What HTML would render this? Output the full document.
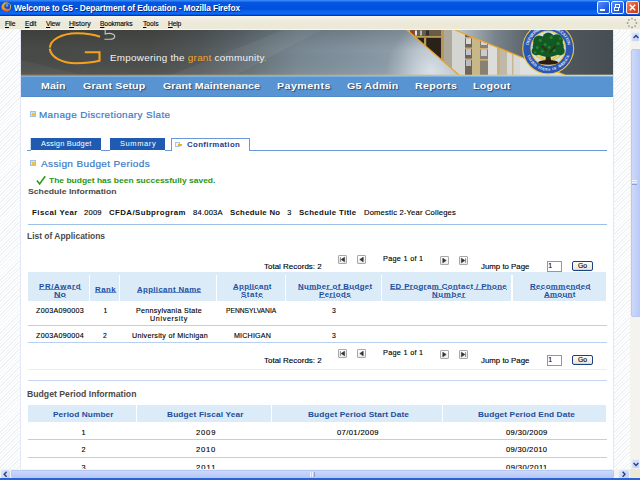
<!DOCTYPE html>
<html><head><meta charset="utf-8"><title>G5</title>
<style>
html,body{margin:0;padding:0;width:640px;height:480px;overflow:hidden;background:#fff;font-family:'Liberation Sans',sans-serif;}
.t{position:absolute;white-space:nowrap;font-family:'Liberation Sans',sans-serif;}
.a{position:absolute;box-sizing:border-box;}
.stripe{background:repeating-linear-gradient(135deg,#ffffff 0px,#ffffff 1.5px,#eff3f5 1.5px,#eff3f5 2.5px);}
.pb{position:absolute;width:9px;height:9px;box-sizing:border-box;border:1px solid #a8a8a8;border-radius:1px;background:linear-gradient(#ffffff,#ececec);}
.inp{position:absolute;box-sizing:border-box;border:1px solid #7f9db9;background:#fff;}
.go{position:absolute;box-sizing:border-box;border:1px solid #1c3f86;border-radius:2px;background:linear-gradient(#fdfdfb,#ece9dc 85%,#d6d0c0);}
.hl{position:absolute;height:1px;background:#b9d1ee;}
</style></head><body>
<!-- ===== TITLE BAR ===== -->
<div class="a" style="left:0;top:0;width:640px;height:16px;background:linear-gradient(#3a8cf8 0px,#2a7af2 1px,#0656e2 2.5px,#0050dc 9px,#0862f0 11px,#0a6cf8 14px,#0038c4 15.2px,#0030b0 16px);"></div>
<svg class="a" style="left:0;top:0" width="14" height="14" viewBox="0 0 14 14">
  <circle cx="6.2" cy="7" r="4.7" fill="#f2a024"/>
  <path d="M1.8 8.6 C2.6 10.8 4.4 11.7 6.2 11.7 C8 11.7 9.6 10.9 10.4 9.6 C9 10.6 7.6 10.8 6.2 10.6 C4.4 10.3 2.8 9.8 1.8 8.6 Z" fill="#d83a10"/>
  <circle cx="7.3" cy="6.4" r="3" fill="#1a4cc0"/>
  <circle cx="7" cy="5.4" r="1.4" fill="#5a9ae8"/>
  <path d="M9.6 3.6 C11.2 5 11.4 8 9.8 9.6 C10.4 7.8 10.3 5.4 9.6 3.6 Z" fill="#f8d040"/>
  <path d="M4.8 7.6 C5.6 8.8 7.4 9.2 8.6 8.6 C7 9.8 5.4 9.4 4.8 7.6 Z" fill="#f2a024"/>
</svg>
<!-- caption buttons -->
<div class="a" style="left:597px;top:1px;width:13px;height:13px;border:1px solid #e8eefc;border-radius:2px;background:linear-gradient(135deg,#5a8ef8,#2a62e8 60%,#1e50d0);"></div>
<div class="a" style="left:600px;top:9px;width:5px;height:2px;background:#fff;"></div>
<div class="a" style="left:611px;top:1px;width:13px;height:13px;border:1px solid #e8eefc;border-radius:2px;background:linear-gradient(135deg,#5a8ef8,#2a62e8 60%,#1e50d0);"></div>
<div class="a" style="left:615px;top:4px;width:5px;height:4px;border:1px solid #fff;border-top-width:1.5px;"></div>
<div class="a" style="left:613.5px;top:6.5px;width:5px;height:4px;border:1px solid #fff;border-top-width:1.5px;background:#2a62e8;"></div>
<div class="a" style="left:626px;top:1px;width:13px;height:13px;border:1px solid #f4e8e0;border-radius:2px;background:linear-gradient(135deg,#f08a60,#e0502a 55%,#c83a18);"></div>
<svg class="a" style="left:626px;top:1px" width="13" height="13"><path d="M3.8 3.8 L9.2 9.2 M9.2 3.8 L3.8 9.2" stroke="#fff" stroke-width="1.6"/></svg>
<!-- ===== MENU BAR ===== -->
<div class="a" style="left:0;top:16px;width:640px;height:14px;background:linear-gradient(#f6f4ee 0px,#f0eee4 3px,#ece9d8 7px,#ece9d8 14px);"></div>
<div class="a" style="left:0;top:28.5px;width:640px;height:1px;background:#f8f6ee;"></div>
<svg class="a" style="left:626px;top:17px" width="12" height="12">
  <g fill="#9a9a9a"><circle cx="6" cy="1.6" r="0.9"/><circle cx="9.1" cy="2.9" r="0.9"/><circle cx="10.4" cy="6" r="0.9"/><circle cx="9.1" cy="9.1" r="0.9"/><circle cx="6" cy="10.4" r="0.9"/><circle cx="2.9" cy="9.1" r="0.9"/><circle cx="1.6" cy="6" r="0.9"/><circle cx="2.9" cy="2.9" r="0.9"/></g>
</svg>
<!-- ===== PAGE BACKGROUND ===== -->
<div class="a stripe" style="left:0;top:30px;width:20px;height:439px;"></div>
<div class="a" style="left:20px;top:30px;width:1px;height:439px;background:#e4e7f8;"></div>
<div class="a" style="left:613px;top:30px;width:1px;height:439px;background:#e4e7f8;"></div>
<div class="a stripe" style="left:614px;top:30px;width:15.5px;height:439px;"></div>
<!-- ===== BANNER ===== -->
<svg class="a" style="left:21px;top:30px" width="592" height="46" viewBox="0 0 592 46">
  <defs>
    <linearGradient id="sky" x1="0" x2="592" y1="0" y2="0" gradientUnits="userSpaceOnUse">
      <stop offset="0" stop-color="#474a46"/>
      <stop offset="0.218" stop-color="#4a4c4a"/>
      <stop offset="0.302" stop-color="#525759"/>
      <stop offset="0.37" stop-color="#5f696e"/>
      <stop offset="0.42" stop-color="#6c7a82"/>
      <stop offset="0.471" stop-color="#788893"/>
      <stop offset="0.556" stop-color="#82929f"/>
      <stop offset="0.64" stop-color="#8e9eaa"/>
      <stop offset="0.69" stop-color="#a6b2be"/>
    </linearGradient>
    <linearGradient id="vsh" x1="0" x2="0" y1="0" y2="1">
      <stop offset="0" stop-color="#000" stop-opacity="0.14"/>
      <stop offset="0.45" stop-color="#000" stop-opacity="0"/>
      <stop offset="1" stop-color="#fff" stop-opacity="0.06"/>
    </linearGradient>
    <radialGradient id="glow" cx="410" cy="40" r="45" gradientUnits="userSpaceOnUse">
      <stop offset="0" stop-color="#dfe6ec" stop-opacity="0.9"/>
      <stop offset="1" stop-color="#dfe6ec" stop-opacity="0"/>
    </radialGradient>
    <linearGradient id="sky2" x1="434" x2="592" y1="0" y2="0" gradientUnits="userSpaceOnUse">
      <stop offset="0" stop-color="#c0c8d0"/>
      <stop offset="0.25" stop-color="#7a848c"/>
      <stop offset="0.5" stop-color="#555d63"/>
      <stop offset="1" stop-color="#464e54"/>
    </linearGradient>
    <clipPath id="books"><polygon points="386,0 434,0 544,45 438,45"/></clipPath>
    <clipPath id="leftsky"><polygon points="0,0 386,0 438,45 0,45"/></clipPath>
    
    
  </defs>
  <rect x="0" y="0" width="592" height="45" fill="url(#sky)"/>
  <g clip-path="url(#leftsky)"><rect x="300" y="0" width="150" height="45" fill="url(#glow)"/></g>
  <rect x="0" y="0" width="592" height="45" fill="url(#vsh)"/>
  <polygon points="150,45 215,45 300,0 262,0" fill="#fff" opacity="0.05"/>
  <polygon points="0,30 0,45 60,45" fill="#fff" opacity="0.04"/>
  <polygon points="434,0 592,0 592,45 544,45" fill="url(#sky2)"/>
  <g clip-path="url(#books)">
    <rect x="380" y="0" width="170" height="45" fill="#e0e0de"/>
    <rect x="379" y="0" width="41" height="45" fill="#2a2218"/>
    <rect x="379" y="0" width="41" height="6" fill="#6a5a48"/>
    <rect x="384" y="0.5" width="1.5" height="5" fill="#d03020"/><rect x="387" y="0.5" width="2" height="5" fill="#e8e8e8"/><rect x="391" y="0.5" width="1.5" height="5" fill="#c02818"/><rect x="394" y="0.5" width="2" height="5" fill="#e0e0e0"/><rect x="399" y="0.5" width="2" height="5" fill="#b0b8c0"/><rect x="405" y="0.5" width="3" height="5" fill="#303030"/>
    <rect x="379" y="6" width="41" height="1.8" fill="#b89a58"/>
    <rect x="403" y="8" width="2.2" height="16" fill="#b09858"/>
    <rect x="420" y="0" width="3" height="45" fill="#b89858"/>
    <rect x="423" y="0" width="8" height="45" fill="#aca89c"/>
    <rect x="431" y="0" width="13" height="45" fill="#d4d4d0"/>
    <rect x="444" y="0" width="7" height="45" fill="#706658"/>
    <rect x="445" y="8" width="5" height="6" fill="#d8d8e0"/><rect x="445" y="19" width="5" height="6" fill="#c0c4cc"/><rect x="445" y="30" width="5" height="6" fill="#b8bcc4"/>
    <rect x="444" y="7" width="7" height="1.6" fill="#c8a868"/>
    <rect x="444" y="17.5" width="7" height="1.6" fill="#c8a868"/>
    <rect x="444" y="28.5" width="7" height="1.6" fill="#c8a868"/>
    <rect x="451" y="0" width="8" height="45" fill="#c8b888"/>
    <rect x="459" y="0" width="8" height="45" fill="#8a8070"/>
    <rect x="460" y="8" width="6" height="7" fill="#d0d4da"/><rect x="460" y="19" width="6" height="7" fill="#c8ccd2"/>
    <rect x="459" y="7" width="8" height="1.6" fill="#d0b070"/>
    <rect x="459" y="18" width="8" height="1.6" fill="#d0b070"/>
    <rect x="459" y="29" width="8" height="1.6" fill="#d0b070"/>
    <rect x="467" y="0" width="9" height="45" fill="#dcdcda"/>
    <rect x="476" y="0" width="3" height="45" fill="#c8b080"/>
    <rect x="479" y="0" width="7" height="45" fill="#c0b8a8"/>
    <rect x="486" y="0" width="13" height="45" fill="#d8d8d6"/>
    <rect x="491" y="0" width="1.5" height="45" fill="#c8b890"/>
  </g>
  <line x1="386" y1="0" x2="438" y2="45" stroke="#e8a428" stroke-width="1.25"/>
  <line x1="434" y1="0" x2="544" y2="45" stroke="#e8a428" stroke-width="1.25"/>
  <!-- G logo -->
  <g fill="none" stroke="#f4a21e" stroke-width="2.1">
    <path d="M79 6.8 C72 4 63 3.2 56 3.2 C40 3.3 29.5 10 28.8 17.6"/>
    <path d="M28.8 18.6 C29.5 27 41 33.2 55 33.2 C65 33.2 74 32 78.5 30.8 L78.5 22.3 L63.8 22.3"/>
  </g>
  <path d="M84.2 -1 L84.2 4 C86 3.4 88.5 3.2 90.5 3.6 C93.2 4.2 94 5.8 93.6 7.2 C93 8.8 91.2 9.2 89 9.2 L83.4 9.2" fill="none" stroke="#c2c6c8" stroke-width="1.15"/>
  <!-- seal -->
  <g transform="translate(527.2,18.4)">
    <circle r="26" fill="#e8c444"/>
    <circle r="24.9" fill="#2a56b4"/>
    <g font-family="Liberation Serif" font-size="4.2" font-weight="bold" fill="#e8eefa"><text x="-20.71" y="-4.96" transform="rotate(-76.5 -20.71 -4.96)" text-anchor="middle" dominant-baseline="central">D</text><text x="-19.96" y="-7.44" transform="rotate(-69.6 -19.96 -7.44)" text-anchor="middle" dominant-baseline="central">E</text><text x="-18.91" y="-9.80" transform="rotate(-62.6 -18.91 -9.80)" text-anchor="middle" dominant-baseline="central">P</text><text x="-17.59" y="-12.02" transform="rotate(-55.7 -17.59 -12.02)" text-anchor="middle" dominant-baseline="central">A</text><text x="-16.00" y="-14.06" transform="rotate(-48.7 -16.00 -14.06)" text-anchor="middle" dominant-baseline="central">R</text><text x="-14.18" y="-15.89" transform="rotate(-41.7 -14.18 -15.89)" text-anchor="middle" dominant-baseline="central">T</text><text x="-12.15" y="-17.49" transform="rotate(-34.8 -12.15 -17.49)" text-anchor="middle" dominant-baseline="central">M</text><text x="-9.94" y="-18.84" transform="rotate(-27.8 -9.94 -18.84)" text-anchor="middle" dominant-baseline="central">E</text><text x="-7.59" y="-19.90" transform="rotate(-20.9 -7.59 -19.90)" text-anchor="middle" dominant-baseline="central">N</text><text x="-5.12" y="-20.68" transform="rotate(-13.9 -5.12 -20.68)" text-anchor="middle" dominant-baseline="central">T</text><text x="0.00" y="-21.30" transform="rotate(0.0 0.00 -21.30)" text-anchor="middle" dominant-baseline="central">O</text><text x="2.58" y="-21.14" transform="rotate(7.0 2.58 -21.14)" text-anchor="middle" dominant-baseline="central">F</text><text x="7.59" y="-19.90" transform="rotate(20.9 7.59 -19.90)" text-anchor="middle" dominant-baseline="central">E</text><text x="9.94" y="-18.84" transform="rotate(27.8 9.94 -18.84)" text-anchor="middle" dominant-baseline="central">D</text><text x="12.15" y="-17.49" transform="rotate(34.8 12.15 -17.49)" text-anchor="middle" dominant-baseline="central">U</text><text x="14.18" y="-15.89" transform="rotate(41.7 14.18 -15.89)" text-anchor="middle" dominant-baseline="central">C</text><text x="16.00" y="-14.06" transform="rotate(48.7 16.00 -14.06)" text-anchor="middle" dominant-baseline="central">A</text><text x="17.59" y="-12.02" transform="rotate(55.7 17.59 -12.02)" text-anchor="middle" dominant-baseline="central">T</text><text x="18.91" y="-9.80" transform="rotate(62.6 18.91 -9.80)" text-anchor="middle" dominant-baseline="central">I</text><text x="19.96" y="-7.44" transform="rotate(69.6 19.96 -7.44)" text-anchor="middle" dominant-baseline="central">O</text><text x="20.71" y="-4.96" transform="rotate(76.5 20.71 -4.96)" text-anchor="middle" dominant-baseline="central">N</text></g><g font-family="Liberation Serif" font-size="3.8" font-weight="bold" fill="#e8eefa"><text x="-19.62" y="8.29" transform="rotate(67.1 -19.62 8.29)" text-anchor="middle" dominant-baseline="central">U</text><text x="-18.67" y="10.25" transform="rotate(61.2 -18.67 10.25)" text-anchor="middle" dominant-baseline="central">N</text><text x="-17.54" y="12.09" transform="rotate(55.4 -17.54 12.09)" text-anchor="middle" dominant-baseline="central">I</text><text x="-16.22" y="13.81" transform="rotate(49.6 -16.22 13.81)" text-anchor="middle" dominant-baseline="central">T</text><text x="-14.73" y="15.39" transform="rotate(43.8 -14.73 15.39)" text-anchor="middle" dominant-baseline="central">E</text><text x="-13.09" y="16.80" transform="rotate(37.9 -13.09 16.80)" text-anchor="middle" dominant-baseline="central">D</text><text x="-9.42" y="19.10" transform="rotate(26.2 -9.42 19.10)" text-anchor="middle" dominant-baseline="central">S</text><text x="-7.43" y="19.96" transform="rotate(20.4 -7.43 19.96)" text-anchor="middle" dominant-baseline="central">T</text><text x="-5.36" y="20.61" transform="rotate(14.6 -5.36 20.61)" text-anchor="middle" dominant-baseline="central">A</text><text x="-3.24" y="21.05" transform="rotate(8.8 -3.24 21.05)" text-anchor="middle" dominant-baseline="central">T</text><text x="-1.08" y="21.27" transform="rotate(2.9 -1.08 21.27)" text-anchor="middle" dominant-baseline="central">E</text><text x="1.08" y="21.27" transform="rotate(-2.9 1.08 21.27)" text-anchor="middle" dominant-baseline="central">S</text><text x="5.36" y="20.61" transform="rotate(-14.6 5.36 20.61)" text-anchor="middle" dominant-baseline="central">O</text><text x="7.43" y="19.96" transform="rotate(-20.4 7.43 19.96)" text-anchor="middle" dominant-baseline="central">F</text><text x="11.31" y="18.05" transform="rotate(-32.1 11.31 18.05)" text-anchor="middle" dominant-baseline="central">A</text><text x="13.09" y="16.80" transform="rotate(-37.9 13.09 16.80)" text-anchor="middle" dominant-baseline="central">M</text><text x="14.73" y="15.39" transform="rotate(-43.8 14.73 15.39)" text-anchor="middle" dominant-baseline="central">E</text><text x="16.22" y="13.81" transform="rotate(-49.6 16.22 13.81)" text-anchor="middle" dominant-baseline="central">R</text><text x="17.54" y="12.09" transform="rotate(-55.4 17.54 12.09)" text-anchor="middle" dominant-baseline="central">I</text><text x="18.67" y="10.25" transform="rotate(-61.2 18.67 10.25)" text-anchor="middle" dominant-baseline="central">C</text><text x="19.62" y="8.29" transform="rotate(-67.1 19.62 8.29)" text-anchor="middle" dominant-baseline="central">A</text></g>
    <circle r="17.8" fill="#e8c444"/>
    <circle r="16.6" fill="#d4e0ee"/>
    <g stroke="#e8c830" stroke-width="1.4" opacity="0.9">
      <line x1="0" y1="14" x2="-12" y2="8"/><line x1="0" y1="14" x2="12" y2="8"/>
      <line x1="0" y1="14" x2="-15" y2="2"/><line x1="0" y1="14" x2="15" y2="2"/>
    </g>
    <path d="M-3 13 L-1.5 2 L1.5 2 L3 13 Z" fill="#3a2810"/>
    <ellipse cx="0" cy="14" rx="10" ry="2.4" fill="#2a1c10"/>
    <g fill="#125a22">
      <ellipse cx="0" cy="-2" rx="15.5" ry="10.5"/>
      <circle cx="-9" cy="-7" r="6"/><circle cx="8.5" cy="-8" r="6.2"/><circle cx="0" cy="-10" r="5.8"/>
      <circle cx="-12" cy="2.5" r="4.5"/><circle cx="12" cy="2.5" r="4.5"/>
    </g>
    <g fill="#2a8038">
      <circle cx="-8" cy="-8" r="1.6"/><circle cx="3" cy="-11" r="1.6"/><circle cx="10" cy="-5" r="1.5"/><circle cx="-11" cy="-1" r="1.5"/>
      <circle cx="-3" cy="-4" r="1.5"/><circle cx="6" cy="2" r="1.5"/><circle cx="-6" cy="3" r="1.4"/><circle cx="12" cy="-10" r="1.2"/><circle cx="-13" cy="4" r="1.2"/><circle cx="1" cy="-1" r="1.3"/>
    </g>
    <g fill="#3a2810"><path d="M-1.5 3 L-7 -2 L-6 -3 L-1 1 Z"/><path d="M1.5 3 L7 -3 L8 -2 L1.5 5 Z"/></g>
  </g>
  <linearGradient id="bl" x1="0" x2="592" gradientUnits="userSpaceOnUse"><stop offset="0" stop-color="#b8843c"/><stop offset="0.5" stop-color="#c8a870"/><stop offset="1" stop-color="#e0d8a0"/></linearGradient><rect x="0" y="44.7" width="592" height="1.3" fill="url(#bl)"/>
</svg>
<!-- ===== NAV ===== -->
<div class="a" style="left:21px;top:76px;width:592px;height:21px;background:#5994d2;border-top:1px solid #7fb0dc;border-bottom:1px solid #4f8aca;"></div>
<!-- ===== CONTENT ===== -->
<!-- heading icons -->
<div class="a" style="left:30px;top:111px;width:6px;height:6px;background:#cfe0f4;border:1px solid #9fc2ea;"></div>
<div class="a" style="left:31.5px;top:112.5px;width:3px;height:3px;background:#f0c030;border-radius:1px;"></div>
<div class="a" style="left:30px;top:160.2px;width:6px;height:6px;background:#cfe0f4;border:1px solid #9fc2ea;"></div>
<div class="a" style="left:31.5px;top:161.7px;width:3px;height:3px;background:#f0c030;border-radius:1px;"></div>
<!-- tabs -->
<div class="a" style="left:27px;top:149.5px;width:4px;height:1px;background:#6a9ad8;"></div>
<div class="a" style="left:30px;top:138px;width:1px;height:12px;background:#c8d8f0;"></div>
<div class="a" style="left:31px;top:138px;width:70px;height:11.5px;background:#1f5bb0;"></div>
<div class="a" style="left:101px;top:149.5px;width:9px;height:1px;background:#6a9ad8;"></div>
<div class="a" style="left:110px;top:138px;width:55px;height:11.5px;background:#1f5bb0;"></div>
<div class="a" style="left:165px;top:149.5px;width:7px;height:1px;background:#6a9ad8;"></div>
<div class="a" style="left:171px;top:138px;width:79px;height:12.5px;border:1px solid #6a9ad8;border-bottom:none;background:#fff;"></div>
<div class="a" style="left:250px;top:149.5px;width:357px;height:1px;background:#6a9ad8;"></div>
<div class="a" style="left:175px;top:142px;width:5px;height:5px;border:1px solid #a8c4e8;background:#eef4fb;"></div>
<div class="a" style="left:178px;top:144px;width:4px;height:1.5px;background:#f0b020;"></div>
<!-- check -->
<svg class="a" style="left:36px;top:175px" width="10" height="10"><path d="M1 5.5 L3.6 9 L9.2 1.2" fill="none" stroke="#2a9614" stroke-width="1.5"/></svg>
<!-- fiscal line -->
<div class="hl" style="left:27.5px;top:223.8px;width:579px;background:#9cc0e8;"></div>
<!-- pagination buttons -->
<div class="pb" style="left:338.0px;top:255.0px"></div>
<svg class="a" style="left:338.0px;top:255.0px" width="9" height="9"><path d="M2.4 2.2 L2.4 6.8 M6.6 2.2 L3.2 4.5 L6.6 6.8 Z" fill="#333" stroke="#333" stroke-width="0.6"/></svg>
<div class="pb" style="left:357.0px;top:255.0px"></div>
<svg class="a" style="left:357.0px;top:255.0px" width="9" height="9"><path d="M6.2 2.2 L2.8 4.5 L6.2 6.8 Z" fill="#333" stroke="#333" stroke-width="0.6"/></svg>
<div class="pb" style="left:440.0px;top:256.0px"></div>
<svg class="a" style="left:440.0px;top:256.0px" width="9" height="9"><path d="M2.8 2.2 L6.2 4.5 L2.8 6.8 Z" fill="#333" stroke="#333" stroke-width="0.6"/></svg>
<div class="pb" style="left:458.5px;top:256.0px"></div>
<svg class="a" style="left:458.5px;top:256.0px" width="9" height="9"><path d="M6.6 2.2 L6.6 6.8 M2.4 2.2 L5.8 4.5 L2.4 6.8 Z" fill="#333" stroke="#333" stroke-width="0.6"/></svg>
<div class="inp" style="left:547px;top:260.5px;width:14.5px;height:11px"></div>
<div class="go" style="left:572px;top:260.8px;width:20.8px;height:10px"></div>
<div class="pb" style="left:338.0px;top:348.5px"></div>
<svg class="a" style="left:338.0px;top:348.5px" width="9" height="9"><path d="M2.4 2.2 L2.4 6.8 M6.6 2.2 L3.2 4.5 L6.6 6.8 Z" fill="#333" stroke="#333" stroke-width="0.6"/></svg>
<div class="pb" style="left:357.0px;top:348.5px"></div>
<svg class="a" style="left:357.0px;top:348.5px" width="9" height="9"><path d="M6.2 2.2 L2.8 4.5 L6.2 6.8 Z" fill="#333" stroke="#333" stroke-width="0.6"/></svg>
<div class="pb" style="left:440.0px;top:349.5px"></div>
<svg class="a" style="left:440.0px;top:349.5px" width="9" height="9"><path d="M2.8 2.2 L6.2 4.5 L2.8 6.8 Z" fill="#333" stroke="#333" stroke-width="0.6"/></svg>
<div class="pb" style="left:458.5px;top:349.5px"></div>
<svg class="a" style="left:458.5px;top:349.5px" width="9" height="9"><path d="M6.6 2.2 L6.6 6.8 M2.4 2.2 L5.8 4.5 L2.4 6.8 Z" fill="#333" stroke="#333" stroke-width="0.6"/></svg>
<div class="inp" style="left:547px;top:354.5px;width:14.5px;height:11px"></div>
<div class="go" style="left:572px;top:354.8px;width:20.8px;height:10px"></div>
<!-- table1 header -->
<div class="a" style="left:27.5px;top:272px;width:578.6px;height:28.8px;background:#dcebf8;"></div>
<div class="a" style="left:89px;top:274.7px;width:1.2px;height:26.3px;background:#fff;"></div>
<div class="a" style="left:119px;top:274.7px;width:1.2px;height:26.3px;background:#fff;"></div>
<div class="a" style="left:216px;top:274.7px;width:1.2px;height:26.3px;background:#fff;"></div>
<div class="a" style="left:284.8px;top:274.7px;width:1.2px;height:26.3px;background:#fff;"></div>
<div class="a" style="left:381px;top:274.7px;width:1.2px;height:26.3px;background:#fff;"></div>
<div class="a" style="left:511.4px;top:274.7px;width:1.2px;height:26.3px;background:#fff;"></div>
<div class="hl" style="left:27.5px;top:325px;width:579px;"></div>
<div class="hl" style="left:27.5px;top:342px;width:579px;"></div>
<div class="hl" style="left:27.5px;top:368.5px;width:579px;background:#e6eef8;"></div>
<div class="hl" style="left:27.5px;top:380.3px;width:579px;background:#c6d6ee;"></div>
<!-- table2 header -->
<div class="a" style="left:27.5px;top:405px;width:578.8px;height:17px;background:#dcebf8;"></div>
<div class="a" style="left:136.2px;top:405px;width:1.2px;height:17px;background:#fff;"></div>
<div class="a" style="left:270.8px;top:405px;width:1.2px;height:17px;background:#fff;"></div>
<div class="a" style="left:442.3px;top:405px;width:1.2px;height:17px;background:#fff;"></div>
<div class="hl" style="left:27.5px;top:439.4px;width:579px;"></div>
<div class="hl" style="left:27.5px;top:457.2px;width:579px;"></div>
<div id="t0" class="t" style="left:14.00px;top:3.18px;font-size:9.49px;line-height:9.49px;font-weight:bold;color:#fff;letter-spacing:-0.124px;transform:scaleX(0.8800);transform-origin:0 0;text-shadow:1px 1px 0 #0a1f80;">Welcome to G5 - Department of Education - Mozilla Firefox</div>
<div id="t1" class="t" style="left:4.50px;top:19.67px;font-size:7.68px;line-height:7.68px;color:#000;letter-spacing:-0.178px;transform:scaleX(0.8800);transform-origin:0 0;-webkit-text-stroke:0.12px #000;"><u style="text-decoration-thickness:0.7px;text-underline-offset:0.6px">F</u>ile</div>
<div id="t2" class="t" style="left:24.50px;top:19.67px;font-size:7.68px;line-height:7.68px;color:#000;letter-spacing:-0.083px;transform:scaleX(0.8800);transform-origin:0 0;-webkit-text-stroke:0.12px #000;"><u style="text-decoration-thickness:0.7px;text-underline-offset:0.6px">E</u>dit</div>
<div id="t3" class="t" style="left:46.00px;top:19.67px;font-size:7.68px;line-height:7.68px;color:#000;letter-spacing:-0.197px;transform:scaleX(0.8800);transform-origin:0 0;-webkit-text-stroke:0.12px #000;"><u style="text-decoration-thickness:0.7px;text-underline-offset:0.6px">V</u>iew</div>
<div id="t4" class="t" style="left:69.30px;top:19.67px;font-size:7.68px;line-height:7.68px;color:#000;letter-spacing:-0.009px;transform:scaleX(0.9118);transform-origin:0 0;-webkit-text-stroke:0.12px #000;"><u style="text-decoration-thickness:0.7px;text-underline-offset:0.6px">H</u>istory</div>
<div id="t5" class="t" style="left:100.25px;top:19.67px;font-size:7.68px;line-height:7.68px;color:#000;letter-spacing:-0.173px;transform:scaleX(0.8800);transform-origin:0 0;-webkit-text-stroke:0.12px #000;"><u style="text-decoration-thickness:0.7px;text-underline-offset:0.6px">B</u>ookmarks</div>
<div id="t6" class="t" style="left:142.75px;top:19.67px;font-size:7.68px;line-height:7.68px;color:#000;letter-spacing:-0.014px;transform:scaleX(0.8800);transform-origin:0 0;-webkit-text-stroke:0.12px #000;"><u style="text-decoration-thickness:0.7px;text-underline-offset:0.6px">T</u>ools</div>
<div id="t7" class="t" style="left:168.10px;top:19.67px;font-size:7.68px;line-height:7.68px;color:#000;letter-spacing:-0.208px;transform:scaleX(0.8800);transform-origin:0 0;-webkit-text-stroke:0.12px #000;"><u style="text-decoration-thickness:0.7px;text-underline-offset:0.6px">H</u>elp</div>
<div id="t8" class="t" style="left:110.25px;top:52.59px;font-size:9.42px;line-height:9.42px;color:#f2f2f2;letter-spacing:0.237px;transform:scaleX(1.0500);transform-origin:0 0;">Empowering the <span style="color:#f5a623">grant</span> community<span style="color:#f5a623">.</span></div>
<div id="t9" class="t" style="left:40.85px;top:80.62px;font-size:9.86px;line-height:9.86px;font-weight:bold;color:#fff;letter-spacing:0.083px;transform:scaleX(1.0800);transform-origin:0 0;text-shadow:1px 1px 1px #2a4a70;">Main</div>
<div id="t10" class="t" style="left:83.00px;top:80.62px;font-size:9.86px;line-height:9.86px;font-weight:bold;color:#fff;letter-spacing:0.131px;transform:scaleX(1.0800);transform-origin:0 0;text-shadow:1px 1px 1px #2a4a70;">Grant Setup</div>
<div id="t11" class="t" style="left:162.50px;top:80.62px;font-size:9.86px;line-height:9.86px;font-weight:bold;color:#fff;letter-spacing:0.071px;transform:scaleX(1.0800);transform-origin:0 0;text-shadow:1px 1px 1px #2a4a70;">Grant Maintenance</div>
<div id="t12" class="t" style="left:276.75px;top:80.62px;font-size:9.86px;line-height:9.86px;font-weight:bold;color:#fff;letter-spacing:0.431px;transform:scaleX(1.0800);transform-origin:0 0;text-shadow:1px 1px 1px #2a4a70;">Payments</div>
<div id="t13" class="t" style="left:346.50px;top:80.62px;font-size:9.86px;line-height:9.86px;font-weight:bold;color:#fff;letter-spacing:0.185px;transform:scaleX(1.0800);transform-origin:0 0;text-shadow:1px 1px 1px #2a4a70;">G5 Admin</div>
<div id="t14" class="t" style="left:415.25px;top:80.62px;font-size:9.86px;line-height:9.86px;font-weight:bold;color:#fff;letter-spacing:0.250px;transform:scaleX(1.0800);transform-origin:0 0;text-shadow:1px 1px 1px #2a4a70;">Reports</div>
<div id="t15" class="t" style="left:473.25px;top:80.62px;font-size:9.86px;line-height:9.86px;font-weight:bold;color:#fff;letter-spacing:0.250px;transform:scaleX(1.0800);transform-origin:0 0;text-shadow:1px 1px 1px #2a4a70;">Logout</div>
<div id="t16" class="t" style="left:39.25px;top:109.99px;font-size:9.42px;line-height:9.42px;color:#3a7bc8;letter-spacing:0.372px;transform:scaleX(1.0500);transform-origin:0 0;-webkit-text-stroke:0.2px #3a7bc8;">Manage Discretionary Slate</div>
<div id="t17" class="t" style="left:41.00px;top:140.96px;font-size:7.10px;line-height:7.10px;color:#fff;letter-spacing:0.184px;transform:scaleX(1.0500);transform-origin:0 0;">Assign Budget</div>
<div id="t18" class="t" style="left:119.50px;top:140.96px;font-size:7.10px;line-height:7.10px;color:#fff;letter-spacing:0.595px;transform:scaleX(1.0500);transform-origin:0 0;">Summary</div>
<div id="t19" class="t" style="left:187.15px;top:140.64px;font-size:7.25px;line-height:7.25px;font-weight:bold;color:#1a3c8c;letter-spacing:0.348px;transform:scaleX(1.0800);transform-origin:0 0;">Confirmation</div>
<div id="t20" class="t" style="left:40.50px;top:159.07px;font-size:9.57px;line-height:9.57px;color:#3a7bc8;letter-spacing:0.342px;transform:scaleX(1.0500);transform-origin:0 0;-webkit-text-stroke:0.2px #3a7bc8;">Assign Budget Periods</div>
<div id="t21" class="t" style="left:49.00px;top:176.70px;font-size:8.12px;line-height:8.12px;font-weight:bold;color:#2a9614;letter-spacing:-0.003px;transform:scaleX(1.0434);transform-origin:0 0;">The budget has been successfully saved.</div>
<div id="t22" class="t" style="left:27.75px;top:188.30px;font-size:8.12px;line-height:8.12px;font-weight:bold;color:#4a4a4a;letter-spacing:0.002px;transform:scaleX(1.0675);transform-origin:0 0;">Schedule Information</div>
<div id="t23" class="t" style="left:31.50px;top:208.84px;font-size:7.25px;line-height:7.25px;font-weight:bold;color:#111;letter-spacing:0.428px;transform:scaleX(1.0800);transform-origin:0 0;">Fiscal Year</div>
<div id="t24" class="t" style="left:84.10px;top:208.84px;font-size:7.25px;line-height:7.25px;color:#000;letter-spacing:0.198px;transform:scaleX(1.0500);transform-origin:0 0;-webkit-text-stroke:0.12px #000;">2009</div>
<div id="t25" class="t" style="left:108.75px;top:208.84px;font-size:7.25px;line-height:7.25px;font-weight:bold;color:#111;letter-spacing:0.393px;transform:scaleX(1.0800);transform-origin:0 0;">CFDA/Subprogram</div>
<div id="t26" class="t" style="left:192.75px;top:208.84px;font-size:7.25px;line-height:7.25px;color:#000;letter-spacing:0.200px;transform:scaleX(1.0500);transform-origin:0 0;-webkit-text-stroke:0.12px #000;">84.003A</div>
<div id="t27" class="t" style="left:229.75px;top:208.84px;font-size:7.25px;line-height:7.25px;font-weight:bold;color:#111;letter-spacing:0.252px;transform:scaleX(1.0800);transform-origin:0 0;">Schedule No</div>
<div id="t28" class="t" style="left:287.25px;top:208.84px;font-size:7.25px;line-height:7.25px;color:#000;letter-spacing:0.000px;-webkit-text-stroke:0.12px #000;">3</div>
<div id="t29" class="t" style="left:299.35px;top:208.84px;font-size:7.25px;line-height:7.25px;font-weight:bold;color:#111;letter-spacing:0.304px;transform:scaleX(1.0800);transform-origin:0 0;">Schedule Title</div>
<div id="t30" class="t" style="left:364.40px;top:208.84px;font-size:7.25px;line-height:7.25px;color:#000;letter-spacing:0.168px;transform:scaleX(1.0500);transform-origin:0 0;-webkit-text-stroke:0.12px #000;">Domestic 2-Year Colleges</div>
<div id="t31" class="t" style="left:27.25px;top:232.78px;font-size:8.26px;line-height:8.26px;font-weight:bold;color:#4a4a4a;letter-spacing:0.000px;transform:scaleX(1.0232);transform-origin:0 0;">List of Applications</div>
<div id="t32" class="t" style="left:382.50px;top:255.79px;font-size:6.96px;line-height:6.96px;color:#000;letter-spacing:0.268px;transform:scaleX(1.0500);transform-origin:0 0;-webkit-text-stroke:0.12px #000;">Page 1 of 1</div>
<div id="t33" class="t" style="left:264.15px;top:262.53px;font-size:7.61px;line-height:7.61px;color:#000;letter-spacing:0.006px;transform:scaleX(1.0477);transform-origin:0 0;-webkit-text-stroke:0.12px #000;">Total Records: 2</div>
<div id="t34" class="t" style="left:480.75px;top:262.53px;font-size:7.61px;line-height:7.61px;color:#000;letter-spacing:0.000px;transform:scaleX(1.0323);transform-origin:0 0;-webkit-text-stroke:0.12px #000;">Jump to Page</div>
<div id="t35" class="t" style="left:548.30px;top:262.69px;font-size:6.96px;line-height:6.96px;color:#000;letter-spacing:0.000px;-webkit-text-stroke:0.12px #000;">1</div>
<div id="t36" class="t" style="left:578.25px;top:262.98px;font-size:6.38px;line-height:6.38px;color:#000;letter-spacing:0.000px;transform:scaleX(1.0625);transform-origin:0 0;-webkit-text-stroke:0.12px #000;">Go</div>
<div id="t37" class="t" style="left:382.50px;top:349.79px;font-size:6.96px;line-height:6.96px;color:#000;letter-spacing:0.268px;transform:scaleX(1.0500);transform-origin:0 0;-webkit-text-stroke:0.12px #000;">Page 1 of 1</div>
<div id="t38" class="t" style="left:264.15px;top:356.53px;font-size:7.61px;line-height:7.61px;color:#000;letter-spacing:0.006px;transform:scaleX(1.0477);transform-origin:0 0;-webkit-text-stroke:0.12px #000;">Total Records: 2</div>
<div id="t39" class="t" style="left:480.75px;top:356.53px;font-size:7.61px;line-height:7.61px;color:#000;letter-spacing:0.000px;transform:scaleX(1.0323);transform-origin:0 0;-webkit-text-stroke:0.12px #000;">Jump to Page</div>
<div id="t40" class="t" style="left:548.30px;top:356.69px;font-size:6.96px;line-height:6.96px;color:#000;letter-spacing:0.000px;-webkit-text-stroke:0.12px #000;">1</div>
<div id="t41" class="t" style="left:578.25px;top:356.98px;font-size:6.38px;line-height:6.38px;color:#000;letter-spacing:0.000px;transform:scaleX(1.0625);transform-origin:0 0;-webkit-text-stroke:0.12px #000;">Go</div>
<div id="t42" class="t" style="left:38.50px;top:282.54px;font-size:7.25px;line-height:7.25px;font-weight:bold;color:#1d4f9c;letter-spacing:0.634px;transform:scaleX(1.0800);transform-origin:0 0;text-decoration:underline;text-decoration-color:#5f84c8;text-underline-offset:0.2px;text-decoration-thickness:0.8px;">PR/Award</div>
<div id="t43" class="t" style="left:53.50px;top:290.54px;font-size:7.25px;line-height:7.25px;font-weight:bold;color:#1d4f9c;letter-spacing:0.000px;transform:scaleX(1.2222);transform-origin:0 0;text-decoration:underline;text-decoration-color:#5f84c8;text-underline-offset:0.2px;text-decoration-thickness:0.8px;">No</div>
<div id="t44" class="t" style="left:95.10px;top:286.14px;font-size:7.25px;line-height:7.25px;font-weight:bold;color:#1d4f9c;letter-spacing:0.485px;transform:scaleX(1.0800);transform-origin:0 0;text-decoration:underline;text-decoration-color:#5f84c8;text-underline-offset:0.2px;text-decoration-thickness:0.8px;">Rank</div>
<div id="t45" class="t" style="left:137.35px;top:286.14px;font-size:7.25px;line-height:7.25px;font-weight:bold;color:#1d4f9c;letter-spacing:0.335px;transform:scaleX(1.0800);transform-origin:0 0;text-decoration:underline;text-decoration-color:#5f84c8;text-underline-offset:0.2px;text-decoration-thickness:0.8px;">Applicant Name</div>
<div id="t46" class="t" style="left:233.15px;top:282.54px;font-size:7.25px;line-height:7.25px;font-weight:bold;color:#1d4f9c;letter-spacing:0.322px;transform:scaleX(1.0800);transform-origin:0 0;text-decoration:underline;text-decoration-color:#5f84c8;text-underline-offset:0.2px;text-decoration-thickness:0.8px;">Applicant</div>
<div id="t47" class="t" style="left:240.75px;top:290.54px;font-size:7.25px;line-height:7.25px;font-weight:bold;color:#1d4f9c;letter-spacing:0.549px;transform:scaleX(1.0800);transform-origin:0 0;text-decoration:underline;text-decoration-color:#5f84c8;text-underline-offset:0.2px;text-decoration-thickness:0.8px;">State</div>
<div id="t48" class="t" style="left:297.50px;top:282.54px;font-size:7.25px;line-height:7.25px;font-weight:bold;color:#1d4f9c;letter-spacing:0.366px;transform:scaleX(1.0800);transform-origin:0 0;text-decoration:underline;text-decoration-color:#5f84c8;text-underline-offset:0.2px;text-decoration-thickness:0.8px;">Number of Budget</div>
<div id="t49" class="t" style="left:318.50px;top:290.54px;font-size:7.25px;line-height:7.25px;font-weight:bold;color:#1d4f9c;letter-spacing:0.438px;transform:scaleX(1.0800);transform-origin:0 0;text-decoration:underline;text-decoration-color:#5f84c8;text-underline-offset:0.2px;text-decoration-thickness:0.8px;">Periods</div>
<div id="t50" class="t" style="left:389.50px;top:282.54px;font-size:7.25px;line-height:7.25px;font-weight:bold;color:#1d4f9c;letter-spacing:0.357px;transform:scaleX(1.0800);transform-origin:0 0;text-decoration:underline;text-decoration-color:#5f84c8;text-underline-offset:0.2px;text-decoration-thickness:0.8px;">ED Program Contact / Phone</div>
<div id="t51" class="t" style="left:431.50px;top:290.54px;font-size:7.25px;line-height:7.25px;font-weight:bold;color:#1d4f9c;letter-spacing:0.631px;transform:scaleX(1.0800);transform-origin:0 0;text-decoration:underline;text-decoration-color:#5f84c8;text-underline-offset:0.2px;text-decoration-thickness:0.8px;">Number</div>
<div id="t52" class="t" style="left:530.20px;top:282.54px;font-size:7.25px;line-height:7.25px;font-weight:bold;color:#1d4f9c;letter-spacing:0.395px;transform:scaleX(1.0800);transform-origin:0 0;text-decoration:underline;text-decoration-color:#5f84c8;text-underline-offset:0.2px;text-decoration-thickness:0.8px;">Recommended</div>
<div id="t53" class="t" style="left:544.25px;top:290.54px;font-size:7.25px;line-height:7.25px;font-weight:bold;color:#1d4f9c;letter-spacing:0.331px;transform:scaleX(1.0800);transform-origin:0 0;text-decoration:underline;text-decoration-color:#5f84c8;text-underline-offset:0.2px;text-decoration-thickness:0.8px;">Amount</div>
<div id="t54" class="t" style="left:35.75px;top:308.11px;font-size:6.81px;line-height:6.81px;color:#000;letter-spacing:0.285px;transform:scaleX(1.0500);transform-origin:0 0;-webkit-text-stroke:0.12px #000;">Z003A090003</div>
<div id="t55" class="t" style="left:103.50px;top:308.11px;font-size:6.81px;line-height:6.81px;color:#000;letter-spacing:0.000px;-webkit-text-stroke:0.12px #000;">1</div>
<div id="t56" class="t" style="left:136.40px;top:308.11px;font-size:6.81px;line-height:6.81px;color:#000;letter-spacing:0.254px;transform:scaleX(1.0500);transform-origin:0 0;-webkit-text-stroke:0.12px #000;">Pennsylvania State</div>
<div id="t57" class="t" style="left:149.50px;top:315.61px;font-size:6.81px;line-height:6.81px;color:#000;letter-spacing:0.628px;transform:scaleX(1.0500);transform-origin:0 0;-webkit-text-stroke:0.12px #000;">University</div>
<div id="t58" class="t" style="left:226.20px;top:308.11px;font-size:6.81px;line-height:6.81px;color:#000;letter-spacing:-0.018px;transform:scaleX(0.9861);transform-origin:0 0;-webkit-text-stroke:0.12px #000;">PENNSYLVANIA</div>
<div id="t59" class="t" style="left:332.12px;top:308.11px;font-size:6.81px;line-height:6.81px;color:#000;letter-spacing:0.000px;-webkit-text-stroke:0.12px #000;">3</div>
<div id="t60" class="t" style="left:35.75px;top:333.01px;font-size:6.81px;line-height:6.81px;color:#000;letter-spacing:0.285px;transform:scaleX(1.0500);transform-origin:0 0;-webkit-text-stroke:0.12px #000;">Z003A090004</div>
<div id="t61" class="t" style="left:103.12px;top:333.01px;font-size:6.81px;line-height:6.81px;color:#000;letter-spacing:0.000px;-webkit-text-stroke:0.12px #000;">2</div>
<div id="t62" class="t" style="left:131.50px;top:333.01px;font-size:6.81px;line-height:6.81px;color:#000;letter-spacing:0.273px;transform:scaleX(1.0500);transform-origin:0 0;-webkit-text-stroke:0.12px #000;">University of Michigan</div>
<div id="t63" class="t" style="left:233.50px;top:333.01px;font-size:6.81px;line-height:6.81px;color:#000;letter-spacing:0.163px;transform:scaleX(1.0500);transform-origin:0 0;-webkit-text-stroke:0.12px #000;">MICHIGAN</div>
<div id="t64" class="t" style="left:332.12px;top:333.01px;font-size:6.81px;line-height:6.81px;color:#000;letter-spacing:0.000px;-webkit-text-stroke:0.12px #000;">3</div>
<div id="t65" class="t" style="left:27.25px;top:389.56px;font-size:8.41px;line-height:8.41px;font-weight:bold;color:#4a4a4a;letter-spacing:-0.002px;transform:scaleX(1.0329);transform-origin:0 0;">Budget Period Information</div>
<div id="t66" class="t" style="left:53.00px;top:410.97px;font-size:7.68px;line-height:7.68px;font-weight:bold;color:#1d4f9c;letter-spacing:0.088px;transform:scaleX(1.0800);transform-origin:0 0;">Period Number</div>
<div id="t67" class="t" style="left:167.00px;top:410.97px;font-size:7.68px;line-height:7.68px;font-weight:bold;color:#1d4f9c;letter-spacing:0.139px;transform:scaleX(1.0800);transform-origin:0 0;">Budget Fiscal Year</div>
<div id="t68" class="t" style="left:308.00px;top:410.97px;font-size:7.68px;line-height:7.68px;font-weight:bold;color:#1d4f9c;letter-spacing:0.113px;transform:scaleX(1.0800);transform-origin:0 0;">Budget Period Start Date</div>
<div id="t69" class="t" style="left:477.90px;top:410.97px;font-size:7.68px;line-height:7.68px;font-weight:bold;color:#1d4f9c;letter-spacing:0.090px;transform:scaleX(1.0800);transform-origin:0 0;">Budget Period End Date</div>
<div id="t70" class="t" style="left:81.38px;top:428.84px;font-size:7.25px;line-height:7.25px;color:#000;letter-spacing:0.000px;-webkit-text-stroke:0.12px #000;">1</div>
<div id="t71" class="t" style="left:196.00px;top:428.84px;font-size:7.25px;line-height:7.25px;color:#000;letter-spacing:0.786px;transform:scaleX(1.0500);transform-origin:0 0;-webkit-text-stroke:0.12px #000;">2009</div>
<div id="t72" class="t" style="left:337.25px;top:428.84px;font-size:7.25px;line-height:7.25px;color:#000;letter-spacing:0.366px;transform:scaleX(1.0500);transform-origin:0 0;-webkit-text-stroke:0.12px #000;">07/01/2009</div>
<div id="t73" class="t" style="left:506.35px;top:428.84px;font-size:7.25px;line-height:7.25px;color:#000;letter-spacing:0.335px;transform:scaleX(1.0500);transform-origin:0 0;-webkit-text-stroke:0.12px #000;">09/30/2009</div>
<div id="t74" class="t" style="left:81.50px;top:446.34px;font-size:7.25px;line-height:7.25px;color:#000;letter-spacing:0.000px;-webkit-text-stroke:0.12px #000;">2</div>
<div id="t75" class="t" style="left:196.00px;top:446.34px;font-size:7.25px;line-height:7.25px;color:#000;letter-spacing:0.702px;transform:scaleX(1.0500);transform-origin:0 0;-webkit-text-stroke:0.12px #000;">2010</div>
<div id="t76" class="t" style="left:506.35px;top:446.34px;font-size:7.25px;line-height:7.25px;color:#000;letter-spacing:0.308px;transform:scaleX(1.0500);transform-origin:0 0;-webkit-text-stroke:0.12px #000;">09/30/2010</div>
<div id="t77" class="t" style="left:81.50px;top:463.84px;font-size:7.25px;line-height:7.25px;color:#000;letter-spacing:0.000px;-webkit-text-stroke:0.12px #000;">3</div>
<div id="t78" class="t" style="left:196.00px;top:463.84px;font-size:7.25px;line-height:7.25px;color:#000;letter-spacing:0.952px;transform:scaleX(1.0500);transform-origin:0 0;-webkit-text-stroke:0.12px #000;">2011</div>
<div id="t79" class="t" style="left:506.35px;top:463.84px;font-size:7.25px;line-height:7.25px;color:#000;letter-spacing:0.390px;transform:scaleX(1.0500);transform-origin:0 0;-webkit-text-stroke:0.12px #000;">09/30/2011</div>
<!-- ===== SCROLLBARS ===== -->
<div class="a" style="left:629.5px;top:30px;width:10.5px;height:439.5px;background:#f4f3ee;"></div>
<div class="a" style="left:630.5px;top:31.5px;width:9.5px;height:10px;border-radius:2px;background:linear-gradient(135deg,#dce6fd,#bccffa);border:1px solid #e8eefc;"></div>
<svg class="a" style="left:630.5px;top:31.5px" width="10" height="10"><path d="M2.6 6 L5 3.6 L7.4 6" fill="none" stroke="#30406a" stroke-width="1.4"/></svg>
<div class="a" style="left:630.5px;top:48.7px;width:10px;height:268px;border-radius:2px;background:linear-gradient(90deg,#cdd9fb,#c2d0f9 50%,#b8c8f6);border:1px solid #b8c8f4;"></div>
<div class="a" style="left:632px;top:180px;width:5px;height:1px;background:#eef2fe;"></div>
<div class="a" style="left:632px;top:182px;width:5px;height:1px;background:#eef2fe;"></div>
<div class="a" style="left:632px;top:184px;width:5px;height:1px;background:#8aa0d8;"></div>
<div class="a" style="left:630.5px;top:459px;width:9.5px;height:10px;border-radius:2px;background:linear-gradient(135deg,#dce6fd,#bccffa);border:1px solid #e8eefc;"></div>
<svg class="a" style="left:630.5px;top:459px" width="10" height="10"><path d="M2.6 4 L5 6.4 L7.4 4" fill="none" stroke="#30406a" stroke-width="1.4"/></svg>
<!-- horizontal -->
<div class="a" style="left:0;top:469.3px;width:640px;height:9px;background:#f4f3ee;"></div>
<div class="a" style="left:0;top:469.3px;width:640px;height:1px;background:#f8f4e0;"></div>
<div class="a" style="left:0.5px;top:470.3px;width:9px;height:8.5px;border-radius:2px;background:linear-gradient(135deg,#dce6fd,#bccffa);"></div>
<svg class="a" style="left:0.5px;top:470.3px" width="9" height="9"><path d="M5.6 1.8 L3.2 4.3 L5.6 6.8" fill="none" stroke="#30406a" stroke-width="1.4"/></svg>
<div class="a" style="left:11px;top:470.3px;width:603px;height:8.2px;border-radius:1px;background:linear-gradient(#cdd9fb,#c2d0f9 50%,#b8c8f6);border:1px solid #b8c8f4;"></div>
<div class="a" style="left:310px;top:472px;width:1px;height:5px;background:#eef2fe;"></div>
<div class="a" style="left:312px;top:472px;width:1px;height:5px;background:#eef2fe;"></div>
<div class="a" style="left:314px;top:472px;width:1px;height:5px;background:#8aa0d8;"></div>
<div class="a" style="left:619px;top:470.3px;width:9.5px;height:8.5px;border-radius:2px;background:linear-gradient(135deg,#dce6fd,#bccffa);"></div>
<svg class="a" style="left:619px;top:470.3px" width="10" height="9"><path d="M3.6 1.8 L6 4.3 L3.6 6.8" fill="none" stroke="#30406a" stroke-width="1.4"/></svg>
<div class="a" style="left:629.5px;top:469.3px;width:10.5px;height:9px;background:#ece9d8;"></div>
<div class="a" style="left:0;top:478.3px;width:640px;height:1.7px;background:#2a62d8;"></div>
</body></html>
